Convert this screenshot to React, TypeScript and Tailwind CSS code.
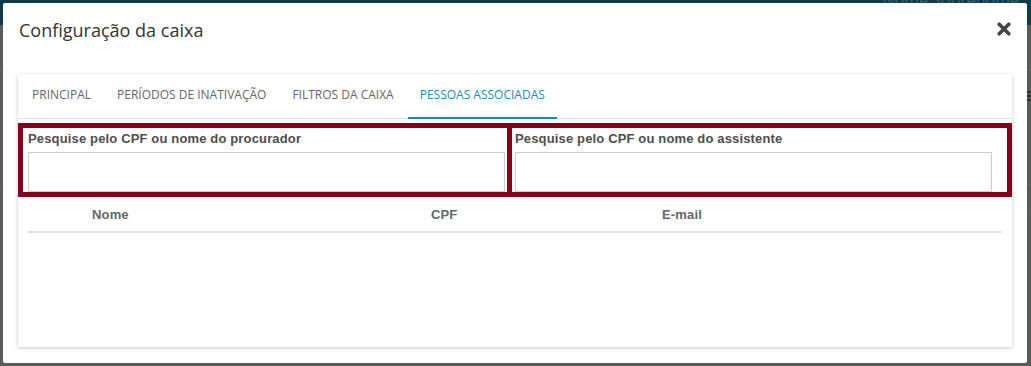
import React from "react";

const tabs = [
  { label: "PRINCIPAL", active: false },
  { label: "PERÍODOS DE INATIVAÇÃO", active: false },
  { label: "FILTROS DA CAIXA", active: false },
  { label: "PESSOAS ASSOCIADAS", active: true },
];

function CloseIcon() {
  return (
    <svg width="14" height="14" viewBox="0 0 14 14" aria-hidden="true">
      <path d="M2.2 2.2 L11.8 11.8 M11.8 2.2 L2.2 11.8" stroke="#444" strokeWidth="3.6" strokeLinecap="round" fill="none" />
    </svg>
  );
}

function SearchBox({ label, className }: { label: string; className: string }) {
  return (
    <div className={className}>
      <label
        className="block h-[24px] pt-[3px] text-[13px] leading-[16px] font-bold tracking-[0.15px] text-[#4d4d4d]"
        style={{ fontFamily: '"Liberation Sans", Arial, sans-serif' }}
      >
        {label}
      </label>
      <input type="text" className="block h-[40px] w-full border border-[#cccccc] bg-white outline-none" />
    </div>
  );
}

export default function App() {
  return (
    <div className="relative h-[366px] w-[1031px] overflow-hidden bg-[#5a5a5a]">
      {/* dimmed page behind the modal */}
      <div className="flex h-[25px] items-start justify-end bg-[#0d3b4e] pr-[12px]">
        <span
          className="mt-[-9px] text-[16px] leading-[18px] text-[#3d6170]"
          style={{ fontFamily: '"Open Sans", sans-serif' }}
        >
          Nome Sobrenome
        </span>
      </div>
      <div className="mt-[44px] h-px bg-[#666]" />
      <div className="mt-[114px] h-px bg-[#666]" />
      <div className="mt-[30px] h-px bg-[#626262]" />
      <div className="absolute right-0 top-[91px] flex flex-col gap-[2px]">
        <div className="h-[2px] w-[4px] bg-[#2a2a2a]" />
        <div className="h-[2px] w-[4px] bg-[#2a2a2a]" />
        <div className="h-[2px] w-[4px] bg-[#2a2a2a]" />
      </div>

      {/* modal */}
      <div
        className="absolute left-[3px] top-[3px] flex h-[360px] w-[1024px] flex-col rounded-[2px] bg-white"
        style={{ fontFamily: '"Open Sans", sans-serif' }}
      >
        <div className="flex items-start justify-between pl-[16px] pr-[16px] pt-[15px]">
          <h4 className="text-[18px] leading-[24px] text-[#333]">Configuração da caixa</h4>
          <button className="mt-[4px]" aria-label="Fechar">
            <CloseIcon />
          </button>
        </div>

        <div className="mx-[15px] mt-[32px] h-[273px] bg-white shadow-[0_1px_4px_rgba(0,0,0,0.22)]">
          <div className="flex gap-[2px] border-b border-[#dddddd] pl-[2px]">
            {tabs.map((t) => (
              <div
                key={t.label}
                className={
                  t.active
                    ? "mb-[-1px] h-[45px] border-b-2 border-[#1a87ad] px-3 pt-[13px] text-[12px] leading-[16px] text-[#1a8ab0]"
                    : "mb-[-1px] h-[45px] border-b-2 border-transparent px-3 pt-[13px] text-[12px] leading-[16px] text-[#666]"
                }
              >
                {t.label}
              </div>
            ))}
          </div>

          <div className="mt-[4px] flex">
            <SearchBox
              label="Pesquise pelo CPF ou nome do procurador"
              className="w-[494px] border-[5px] border-[#87001b] pl-[5px] pr-[2px]"
            />
            <SearchBox
              label="Pesquise pelo CPF ou nome do assistente"
              className="flex-1 border-[5px] border-l-0 border-[#87001b] pl-[3px] pr-[15px]"
            />
          </div>

          <div
            className="ml-[10px] mr-[11px] flex h-[36px] items-center border-b-2 border-[#dddddd] pt-[2px] text-[13px] leading-[16px] font-bold tracking-[0.15px] text-[#666]"
            style={{ fontFamily: '"Liberation Sans", Arial, sans-serif' }}
          >
            <div className="w-[64px]" />
            <div className="w-[339px]">Nome</div>
            <div className="w-[231px]">CPF</div>
            <div className="flex-1">E-mail</div>
          </div>
        </div>
      </div>
    </div>
  );
}
